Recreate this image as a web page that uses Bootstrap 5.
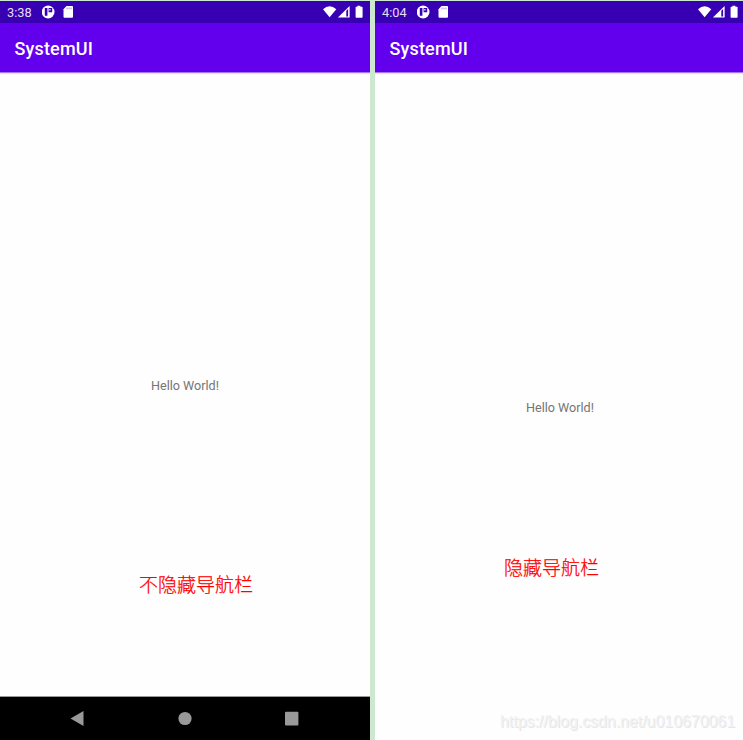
<!DOCTYPE html>
<html lang="zh-CN">
<head>
<meta charset="utf-8">
<meta name="viewport" content="width=device-width, initial-scale=1">
<title>SystemUI</title>
<link href="https://cdn.jsdelivr.net/npm/bootstrap@5.3.0/dist/css/bootstrap.min.css" rel="stylesheet">
<style>
body { background: #cce8cf; font-family: Roboto, "Noto Sans CJK SC", sans-serif; }
.screens { height: 740px; padding-top: 1px; gap: 5px; }
.phone { background: #fefefe; }
.phone-a { width: 370px; }
.phone-b { width: 368px; }
.status { height: 22px; background: #3700b3; padding: 0 6px 0 7px; color: #e4def5; font-size: 12.8px; }
.phone-b .status { padding-right: 4px; }
.status .clock { width: 35px; line-height: 22px; padding-top: 1px; }
.appbar { height: 50px; background: #6200ee; padding: 0 14px 0 14.4px; border-bottom: 1px solid #a678f0; box-shadow: 0 1px 1px #e6e6e6; }
.appbar h1 { font-size: 18px; font-weight: 500; letter-spacing: .18px; line-height: 52px; }
.hello { color: #757575; font-size: 12.6px; line-height: 18px; }
.phone-a .hello { padding-top: 2px; }
.phone-b .hello { padding: 2px 0 0 2px; }
.navkeys { height: 44px; background: #000; border-top: 1px solid #999; }
.caption { color: #f00; font: 300 19px/28px "Noto Sans CJK SC", sans-serif; white-space: nowrap; -webkit-text-stroke: .25px #f00; }
.caption-a { left: 139px; top: 569px; }
.caption-b { left: 129px; top: 552px; }
.site-url { right: 8px; bottom: 8px; font: 15.900px/20px "Liberation Sans", Arial, sans-serif; color: #f2f2f2; text-shadow: 1px 1px 0 #e6e6e6; white-space: nowrap; }
</style>
<script src="https://cdn.jsdelivr.net/npm/bootstrap@5.3.0/dist/js/bootstrap.bundle.min.js"></script>
</head>
<body class="overflow-hidden">
<svg class="d-none">
  <symbol id="left-icons" viewBox="0 0 32 14">
    <circle cx="6.100" cy="7" r="6.400" fill="#fff"/>
    <path d="M2.800 3h2.600v7.800H2.800zM6.600 3h3.600v4.200H6.600z" fill="#3700b3"/>
    <path d="M7.300 3.900h1.200v1.600H7.300z" fill="#fff"/>
    <path d="M24.500 1H30q1 0 1 1v9.800q0 1-1 1h-7.500q-1 0-1-1V4.300z" fill="#fff"/>
    <path d="M25 2.600v1.700M27 2.600v1.700M29 2.600v1.700" stroke="#9b80d9" stroke-width=".9"/>
  </symbol>
  <symbol id="right-icons" viewBox="0 0 42 14">
    <path d="M1 4.200Q7.600 -1.800 14.300 4.200L7.600 12.200z" fill="#fff"/>
    <path d="M15.900 12.600L27.600 1v11.600z" fill="#fff"/>
    <path d="M24.300 5.700l1.800-1.800v7.600h-1.800z" fill="#3700b3"/>
    <path d="M33.700 1.800h1.700V.8h3v1h1.600q.6 0 .6.600v9.700q0 .7-.7.700h-5.600q-.7 0-.7-.7V2.400q0-.6.600-.6z" fill="#fff"/>
  </symbol>
</svg>
<main class="screens d-flex">
  <section class="phone phone-a d-flex flex-column position-relative flex-shrink-0">
    <div class="status d-flex align-items-center">
      <span class="clock">3:38</span>
      <svg width="32" height="14"><use href="#left-icons"/></svg>
      <svg class="ms-auto" width="42" height="14"><use href="#right-icons"/></svg>
    </div>
    <header class="appbar text-white"><h1 class="m-0">SystemUI</h1></header>
    <div class="flex-grow-1 d-flex align-items-center justify-content-center"><span class="hello">Hello World!</span></div>
    <nav class="navkeys">
      <svg class="d-block" width="370" height="43" fill="#999">
        <path d="M70.500 21.500L83.500 14v15z"/>
        <circle cx="185" cy="21.500" r="6.600"/>
        <rect x="285" y="14.800" width="13.400" height="13.700" rx="1"/>
      </svg>
    </nav>
    <span class="caption caption-a position-absolute">不隐藏导航栏</span>
  </section>
  <section class="phone phone-b d-flex flex-column position-relative flex-shrink-0">
    <div class="status d-flex align-items-center">
      <span class="clock">4:04</span>
      <svg width="32" height="14"><use href="#left-icons"/></svg>
      <svg class="ms-auto" width="42" height="14"><use href="#right-icons"/></svg>
    </div>
    <header class="appbar text-white"><h1 class="m-0">SystemUI</h1></header>
    <div class="flex-grow-1 d-flex align-items-center justify-content-center"><span class="hello">Hello World!</span></div>
    <span class="caption caption-b position-absolute">隐藏导航栏</span>
    <span class="site-url position-absolute">https://blog.csdn.net/u010670061</span>
  </section>
</main>
</body>
</html>
